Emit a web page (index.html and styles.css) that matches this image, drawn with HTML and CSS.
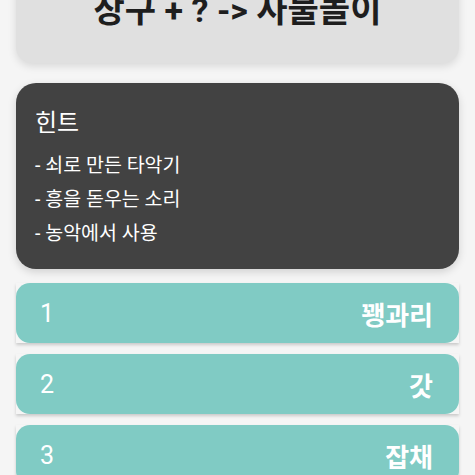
FILE: index.html
```html
<!DOCTYPE html>
<html lang="ko">
<head>
<meta charset="utf-8">
<link rel="stylesheet" href="styles.css">
</head>
<body>
<main class="page">
  <section class="title-card">
    <h1 class="title">장구 + ? -&gt; 사물놀이</h1>
  </section>
  <section class="hint-card">
    <h2 class="hint-title">힌트</h2>
    <p class="hint-line">- 쇠로 만든 타악기</p>
    <p class="hint-line">- 흥을 돋우는 소리</p>
    <p class="hint-line">- 농악에서 사용</p>
  </section>
  <ul class="answers">
    <li class="answer-wrap"><div class="answer"><span class="num">1</span><span class="word">꽹과리</span></div></li>
    <li class="answer-wrap"><div class="answer"><span class="num">2</span><span class="word">갓</span></div></li>
    <li class="answer-wrap"><div class="answer"><span class="num">3</span><span class="word">잡채</span></div></li>
  </ul>
</main>
</body>
</html>
```

FILE: styles.css
```css
html, body {
  margin: 0;
  padding: 0;
  background: #f5f5f5;
  overflow: hidden;
  height: 475px;
}
body {
  font-family: Roboto, "Noto Sans CJK KR", sans-serif;
}
.page {
  padding: 0 16px;
  display: flex;
  flex-direction: column;
  margin-top: -50px;
}
.title-card {
  background: #e0e0e0;
  border-radius: 16px;
  padding: 40px 16px 33px;
  box-shadow: 0 3px 8px rgba(0,0,0,0.12);
}
.title {
  margin: 0;
  text-align: center;
  font-size: 34px;
  line-height: 40px;
  font-weight: 700;
  color: #1e1e1e;
}
.hint-card {
  margin-top: 20px;
  background: #424242;
  border-radius: 20px;
  padding: 23px 19px 18px;
  color: #fff;
  box-shadow: 0 3px 8px rgba(0,0,0,0.15);
}
.hint-title {
  margin: 0 0 9px;
  font-size: 24px;
  line-height: 34px;
  font-weight: 400;
}
.hint-line {
  margin: 0;
  font-size: 19.5px;
  line-height: 34px;
}
.answers {
  list-style: none;
  margin: 14px 0 0;
  padding: 0;
  display: flex;
  flex-direction: column;
  gap: 11px;
}
.answer-wrap {
  box-shadow: 0 2px 3px rgba(0,0,0,0.18);
}
.answer {
  background: #80cbc4;
  border-radius: 14px;
  height: 60px;
  display: flex;
  align-items: center;
  justify-content: space-between;
  padding: 0 26px 0 24px;
  color: #fff;
}
.num {
  font-size: 25px;
}
.word {
  font-size: 26px;
  font-weight: 700;
}
```
